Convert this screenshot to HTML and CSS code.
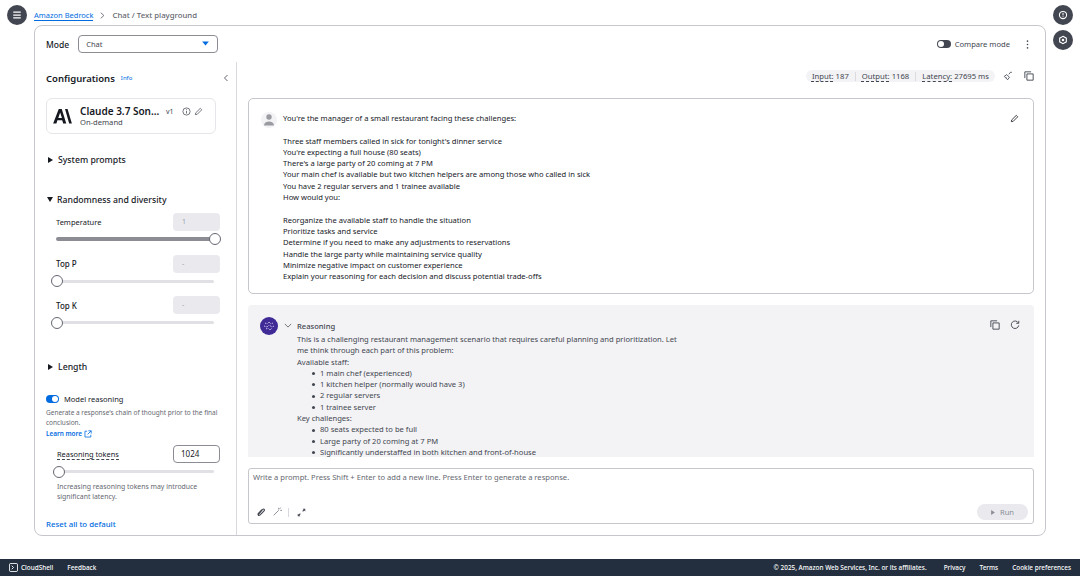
FILE: index.html
```html
<!DOCTYPE html>
<html lang="en">
<head>
<meta charset="utf-8">
<title>Chat / Text playground</title>
<link rel="stylesheet" href="styles.css">
</head>
<body>
<div class="page">
  <button class="fab fab-menu" aria-label="Menu"><svg viewBox="0 0 12 12" width="10" height="10"><path d="M1.500 2.500h9M1.500 6h9M1.500 9.500h9" stroke="#fff" stroke-width="1.500" fill="none"/></svg></button>
  <button class="fab fab-info" aria-label="Info"><svg viewBox="0 0 12 12" width="10" height="10"><circle cx="6" cy="6" r="4.300" stroke="#fff" stroke-width="1.300" fill="none"/><path d="M6 3.500v3M6 7.500v1" stroke="#fff" stroke-width="1.200"/></svg></button>
  <button class="fab fab-hex" aria-label="Notifications"><svg viewBox="0 0 12 12" width="10" height="10"><path d="M6 1.500l4 2.300v4.400l-4 2.300-4-2.300V3.800z" stroke="#fff" stroke-width="1.300" fill="none"/><circle cx="6" cy="6" r="1.500" fill="#fff"/></svg></button>

  <nav class="crumbs">
    <a class="crumb-link">Amazon Bedrock</a>
    <svg class="crumb-sep" viewBox="0 0 8 8" width="7" height="7"><path d="M2 .8L5.600 4 2 7.200" stroke="#656871" stroke-width="1" fill="none"/></svg>
    <span class="crumb-current">Chat / Text playground</span>
  </nav>

  <section class="card">
    <header class="card-head">
      <span class="mode-label">Mode</span>
      <div class="select"><span>Chat</span><svg viewBox="0 0 8 6" width="7" height="5"><path d="M0 .5h8L4 5.500z" fill="#006ce0"/></svg></div>
      <div class="head-right">
        <span class="toggle-off"></span>
        <span class="compare">Compare mode</span>
        <svg class="kebab" viewBox="0 0 4 12" width="3" height="9"><circle cx="2" cy="1.500" r="1.100" fill="#424650"/><circle cx="2" cy="6" r="1.100" fill="#424650"/><circle cx="2" cy="10.500" r="1.100" fill="#424650"/></svg>
      </div>
    </header>

    <div class="card-body">
      <aside class="side">
        <div class="side-title">
          <h2>Configurations</h2><a class="info">Info</a>
          <svg class="collapse" viewBox="0 0 8 10" width="6" height="8"><path d="M6 1L2 5l4 4" stroke="#424650" stroke-width="1.100" fill="none"/></svg>
        </div>

        <div class="model">
          <svg class="logo" viewBox="0 0 22 16" width="21" height="15"><path d="M7 0h3.200L15 15.500h-3.300l-1-3.500H5.600l-1.100 3.500H1zM8.500 3.800L6.500 9.700h3.900zM13.700 0h2.700L21 15.500h-2.900z" fill="#16191f"/></svg>
          <div class="model-text">
            <div class="model-name">Claude 3.7 Son...</div>
            <div class="model-sub">On-demand</div>
          </div>
          <span class="model-ver">v1</span>
          <svg class="ico-info" viewBox="0 0 10 10" width="9" height="9"><circle cx="5" cy="5" r="4" stroke="#424650" stroke-width=".8" fill="none"/><path d="M5 4.300v3M5 2.500v1" stroke="#424650" stroke-width=".8"/></svg>
          <svg class="ico-edit" viewBox="0 0 10 10" width="9" height="9"><path d="M1.500 8.500l.4-2L7 1.500l1.600 1.600-5 5z" stroke="#424650" stroke-width=".8" fill="none"/></svg>
        </div>

        <div class="section s-system"><i class="tri-right"></i>System prompts</div>
        <div class="section s-random"><i class="tri-down"></i>Randomness and diversity</div>

        <div class="param p-temp">
          <div class="param-row"><label class="thin">Temperature</label><span class="num">1</span></div>
          <div class="slider slider-full"><span class="knob knob-end"></span></div>
        </div>
        <div class="param p-next">
          <div class="param-row"><label>Top P</label><span class="num">-</span></div>
          <div class="slider"><span class="knob"></span></div>
        </div>
        <div class="param p-next">
          <div class="param-row"><label>Top K</label><span class="num">-</span></div>
          <div class="slider"><span class="knob"></span></div>
        </div>

        <div class="section s-length"><i class="tri-right"></i>Length</div>

        <div class="reason-toggle"><span class="toggle-on"></span>Model reasoning</div>
        <p class="hint">Generate a response's chain of thought prior to the final conclusion.</p>
        <a class="learn">Learn more <svg viewBox="0 0 10 10" width="8" height="8"><path d="M4 1.500H1.200v7.300h7.300V6M5.500 1H9v3.500M9 1L4.500 5.500" stroke="#006ce0" stroke-width="1" fill="none"/></svg></a>

        <div class="param p-tokens">
          <div class="param-row"><label class="dotted">Reasoning tokens</label><span class="num num-on">1024</span></div>
          <div class="slider slider-tok"><span class="knob"></span></div>
        </div>
        <p class="hint hint-tok">Increasing reasoning tokens may introduce significant latency.</p>
        <a class="reset">Reset all to default</a>
      </aside>

      <main class="main">
        <div class="stats">
          <div class="pill">
            <span><u>Input:</u> 187</span><b></b>
            <span><u>Output:</u> 1168</span><b></b>
            <span><u>Latency:</u> 27695 ms</span>
          </div>
          <svg class="stat-ico" viewBox="0 0 12 12" width="10" height="10"><path d="M1.500 6.500l3-2.200 3.200 3.200L5.500 10.500 1.500 6.500zM7 4l2.500-3M9.500 1l1 1M3.500 7.500l1 1" stroke="#424650" stroke-width="1" fill="none"/></svg>
          <svg class="stat-ico" viewBox="0 0 12 12" width="10" height="10"><path d="M1 8.500V1h7.500M3.500 3.500H11V11H3.500z" stroke="#424650" stroke-width="1.100" fill="none"/></svg>
        </div>

        <article class="msg msg-user">
          <div class="avatar-user"><svg viewBox="0 0 14 14" width="14" height="14"><circle cx="7" cy="4" r="2.700" fill="#9a9ba1"/><path d="M2 12.500c0-2.700 2.300-4 5-4s5 1.300 5 4z" fill="#9a9ba1"/></svg></div>
          <div class="msg-text">
            <p>You're the manager of a small restaurant facing these challenges:</p>
            <p class="blank"></p>
            <p>Three staff members called in sick for tonight's dinner service</p>
            <p>You're expecting a full house (80 seats)</p>
            <p>There's a large party of 20 coming at 7 PM</p>
            <p>Your main chef is available but two kitchen helpers are among those who called in sick</p>
            <p>You have 2 regular servers and 1 trainee available</p>
            <p>How would you:</p>
            <p class="blank"></p>
            <p>Reorganize the available staff to handle the situation</p>
            <p>Prioritize tasks and service</p>
            <p>Determine if you need to make any adjustments to reservations</p>
            <p>Handle the large party while maintaining service quality</p>
            <p>Minimize negative impact on customer experience</p>
            <p>Explain your reasoning for each decision and discuss potential trade-offs</p>
          </div>
          <svg class="msg-edit" viewBox="0 0 10 10" width="9" height="9"><path d="M1.500 8.500l.4-2L7 1.500l1.600 1.600-5 5z" stroke="#16191f" stroke-width=".9" fill="none"/></svg>
        </article>

        <article class="msg msg-reason">
          <div class="avatar-ai"><svg viewBox="0 0 18 18" width="18" height="18"><circle cx="9" cy="9" r="9" fill="#3f2a96"/><path d="M5 6l2 1 2-2 2 2 2-1M4 9l3 1 2-2 3 2 2-1M6 12l2-1 2 2 2-2" stroke="#d8d0f5" stroke-width="1" stroke-dasharray="1 .8" fill="none"/></svg></div>
          <div class="reason-body">
            <div class="reason-head"><svg viewBox="0 0 10 6" width="8" height="5"><path d="M1 1l4 4 4-4" stroke="#424650" stroke-width=".9" fill="none"/></svg><span>Reasoning</span></div>
            <div class="reason-text">
              <p>This is a challenging restaurant management scenario that requires careful planning and prioritization. Let me think through each part of this problem:</p>
              <p>Available staff:</p>
              <ul><li>1 main chef (experienced)</li><li>1 kitchen helper (normally would have 3)</li><li>2 regular servers</li><li>1 trainee server</li></ul>
              <p>Key challenges:</p>
              <ul><li>80 seats expected to be full</li><li>Large party of 20 coming at 7 PM</li><li>Significantly understaffed in both kitchen and front-of-house</li></ul>
            </div>
          </div>
          <div class="reason-actions">
            <svg viewBox="0 0 12 12" width="10" height="10"><path d="M1 8.500V1h7.500M3.500 3.500H11V11H3.500z" stroke="#424650" stroke-width="1.100" fill="none"/></svg>
            <svg viewBox="0 0 12 12" width="10" height="10"><path d="M10 3.500A4.500 4.500 0 1 0 10.500 6.500M10.500 1v3h-3" stroke="#424650" stroke-width="1.100" fill="none"/></svg>
          </div>
        </article>

        <div class="prompt">
          <div class="prompt-text">Write a prompt. Press Shift + Enter to add a new line. Press Enter to generate a response.</div>
          <div class="prompt-foot">
            <svg viewBox="0 0 12 12" width="10" height="10"><path d="M3 9l5-6c1.500-1.500 3 .2 1.700 1.600L5 9.500c-2 1.500-3.500-.5-2-2L7 3" stroke="#424650" stroke-width="1.300" fill="none"/></svg>
            <svg viewBox="0 0 12 12" width="10" height="10"><path d="M2 10l6-6M8 1v2M10 4h2M9 2l1.500-1" stroke="#8c8f98" stroke-width="1.200" fill="none"/></svg>
            <i class="vsep"></i>
            <svg viewBox="0 0 12 12" width="9" height="9"><path d="M7.500 1H11v3.500L9.700 3.200 8 5 7 4l1.800-1.700zM1 11V7.500l1.300 1.300L4 7l1 1-1.700 1.800L4.500 11z" fill="#424650"/></svg>
            <span class="run"><svg viewBox="0 0 6 8" width="4" height="5"><path d="M0 0l6 4-6 4z" fill="#8c8f98"/></svg>Run</span>
          </div>
        </div>
      </main>
    </div>
  </section>

  <footer class="foot">
    <svg viewBox="0 0 10 10" width="9" height="9"><rect x=".5" y=".5" width="9" height="9" rx="1.500" stroke="#fff" fill="none"/><path d="M3 3l2 2-2 2" stroke="#fff" fill="none"/></svg>
    <span class="foot-shell">CloudShell</span>
    <span class="foot-fb">Feedback</span>
    <span class="foot-right">
      <span class="foot-copy">© 2025, Amazon Web Services, Inc. or its affiliates.</span>
      <span>Privacy</span><span>Terms</span><span>Cookie preferences</span>
    </span>
  </footer>
</div>
</body>
</html>
```

FILE: styles.css
```css
* { box-sizing: border-box; }
html, body { margin: 0; padding: 0; background: #fff; }
body { font-family: "Noto Sans", "Open Sans", sans-serif; font-size: 7.600px; color: #16191f; }
p { margin: 0; }
button { border: 0; padding: 0; }

.page { position: relative; width: 1080px; height: 576px; overflow: hidden; display: flex; flex-direction: column; }

.fab { position: absolute; width: 20px; height: 20px; border-radius: 50%; background: #424650; display: flex; align-items: center; justify-content: center; }
.fab-menu { left: 7px; top: 5px; }
.fab-info { left: 1053px; top: 5px; }
.fab-hex { left: 1053px; top: 30px; }

.crumbs { height: 25px; padding: 5px 0 0 34px; display: flex; align-items: center; font-size: 7.500px; }
.crumb-link { color: #006ce0; border-bottom: 1px solid #006ce0; line-height: 10px; }
.crumb-sep { margin: 0 6px 0 6px; }
.crumb-current { color: #656871; font-weight: 500; font-size: 7.800px; }

.card { margin-left: 34px; width: 1012px; height: 511px; border: 1px solid #c6c6cd; border-radius: 8px; display: flex; flex-direction: column; }
.card-head { height: 36px; flex: none; display: flex; align-items: center; padding: 0 16px 0 11px; }
.mode-label { font-size: 8.500px; font-weight: 500; }
.select { margin-left: 9px; width: 140px; height: 18px; border: 1px solid #8c8c94; border-radius: 4px; display: flex; align-items: center; justify-content: space-between; padding: 0 8px 0 7px; color: #424650; font-size: 7.500px; margin-top: -1px; }
.head-right { margin-left: auto; display: flex; align-items: center; }
.toggle-off { width: 14px; height: 8px; border-radius: 4px; background: #424650; position: relative; }
.toggle-off::after { content: ""; position: absolute; left: 1px; top: 1px; width: 6px; height: 6px; border-radius: 50%; background: #fff; }
.compare { margin-left: 4px; color: #424650; }
.kebab { margin-left: 16px; }

.card-body { flex: 1; display: flex; min-height: 0; }

.side { width: 202px; flex: none; border-right: 1px solid #d8d8de; padding: 0 16px 0 11px; }
.side-title { height: 30px; padding-top: 2px; display: flex; align-items: center; }
.side-title h2 { margin: 0; font-size: 9.500px; font-weight: 600; }
.info { margin-left: 6px; font-size: 6px; color: #006ce0; }
.collapse { margin-left: auto; margin-right: -9px; }

.model { margin-top: 6px; width: 170px; height: 36px; border: 1px solid #e6e6ea; border-radius: 6px; display: flex; align-items: center; padding: 0 0 0 5px; position: relative; }
.logo { flex: none; }
.model-text { margin-left: 7px; width: 84px; }
.model-name { font-size: 10px; font-weight: 600; line-height: 13px; white-space: nowrap; }
.model-sub { color: #424650; line-height: 9px; }
.model-ver { margin-left: 2px; font-size: 7px; color: #424650; margin-bottom: 10px; }
.ico-info { margin-left: 8px; margin-bottom: 10px; }
.ico-edit { margin-left: 3px; margin-bottom: 10px; }

.section { display: flex; align-items: center; font-size: 8.700px; font-weight: 500; line-height: 12px; }
.tri-right { width: 0; height: 0; border-left: 5px solid #16191f; border-top: 3px solid transparent; border-bottom: 3px solid transparent; margin: 0 5px 0 2px; }
.tri-down { width: 0; height: 0; border-top: 5px solid #16191f; border-left: 3px solid transparent; border-right: 3px solid transparent; margin: 0 4px 0 1px; }
.s-system { margin-top: 20px; }
.s-random { margin-top: 27.500px; }
.s-length { margin-top: 37px; }

.param { padding-left: 10px; }
.param-row { display: flex; align-items: center; justify-content: space-between; height: 18px; }
.param-row label { font-weight: 500; font-size: 8px; }
.param-row label.thin { font-weight: 400; font-size: 7.500px; }
.param-row label.dotted { font-weight: 400; font-size: 7.400px; border-bottom: 1px dashed #424650; line-height: 10px; margin-left: 1px; }
.num { width: 47px; height: 18px; background: #e9e9ee; border-radius: 4px; padding-left: 9px; line-height: 18px; color: #9ba0a8; font-size: 7px; }
.num-on { background: #fff; border: 1px solid #8c8c94; color: #16191f; line-height: 16px; font-size: 8px; padding-left: 7px; }
.p-temp { margin-top: 7.500px; }
.p-next { margin-top: 13.500px; }
.p-tokens { margin-top: 7px; }

.slider { position: relative; margin-top: 7px; width: 158px; height: 3px; border-radius: 2px; background: #e0e0e5; }
.slider-full { background: #8c8c94; width: 159px; margin-top: 6px; height: 4px; }
.slider-tok { margin: 7px 0 0 2px; width: 156px; }
.knob { position: absolute; left: -5px; top: -4.500px; width: 12px; height: 12px; border-radius: 50%; background: #fff; border: 1px solid #656871; }
.knob-end { left: auto; right: -6px; top: -4px; }

.reason-toggle { margin-top: 20px; display: flex; align-items: center; color: #16191f; font-size: 7.500px; line-height: 12px; }
.toggle-on { width: 13px; height: 8px; border-radius: 4px; background: #006ce0; position: relative; margin-right: 5px; }
.toggle-on::after { content: ""; position: absolute; right: 1px; top: 1px; width: 6px; height: 6px; border-radius: 50%; background: #fff; }
.hint { font-size: 6.500px; line-height: 9.500px; color: #656871; margin-top: 3px; }
.learn { display: flex; align-items: center; gap: 2px; font-size: 6.400px; font-weight: 600; color: #006ce0; line-height: 9px; margin-top: 2px; }
.hint-tok { padding-left: 11px; margin-top: 9px; width: 155px; font-size: 6.900px; }
.reset { display: block; margin-top: 18px; color: #006ce0; font-weight: 500; font-size: 7.800px; line-height: 10px; }

.main { flex: 1; min-width: 0; padding: 0 11px; display: flex; flex-direction: column; }
.stats { height: 36px; flex: none; display: flex; align-items: center; justify-content: flex-end; padding-bottom: 8px; }
.pill { background: #f3f3f6; border-radius: 8px; height: 12px; display: flex; align-items: center; padding: 0 6px; font-size: 7.700px; color: #424650; }
.pill u { text-decoration: underline dashed; text-underline-offset: 1.500px; }
.pill b { width: 1px; height: 9px; background: #dcdce0; margin: 0 6px; }
.stat-ico { margin-left: 8px; }
.stat-ico + .stat-ico { margin-left: 11px; }

.msg { position: relative; flex: none; width: 786px; }
.msg-user { height: 196px; border: 1px solid #c6c6cd; border-radius: 5px; padding: 14px 0 0 12px; display: flex; }
.avatar-user { width: 16px; height: 16px; border-radius: 50%; background: #f3f3f6; display: flex; align-items: center; justify-content: center; margin-right: 6px; flex: none; margin-top: -1px; }
.msg-text { font-size: 7.600px; line-height: 11.300px; color: #16191f; }
.blank { height: 11.300px; }
.msg-edit { position: absolute; right: 14px; top: 15px; }

.msg-reason { margin-top: 11px; height: 152px; background: #f3f3f5; border-radius: 4px 4px 0 0; padding: 12px 0 0 12px; display: flex; overflow: hidden; }
.avatar-ai { flex: none; width: 18px; height: 18px; margin-right: 6px; }
.reason-body { width: 395px; }
.reason-head { display: flex; align-items: center; height: 17px; color: #424650; font-weight: 500; }
.reason-head span { margin-left: 5px; }
.reason-text { margin-left: 13px; font-size: 7.600px; line-height: 11.300px; color: #424650; }
.reason-text ul { margin: 0; padding-left: 15px; list-style: none; }
.reason-text li { display: flex; align-items: center; }
.reason-text li::before { content: ""; width: 3px; height: 3px; border-radius: 50%; background: #424650; margin-right: 5px; flex: none; }
.reason-actions { position: absolute; right: 14px; top: 15px; display: flex; gap: 10px; }

.prompt { margin-top: 11px; width: 786px; height: 56px; border: 1px solid #c6c6cd; border-radius: 3px; flex: none; padding: 3px 5px 3px 4px; display: flex; flex-direction: column; justify-content: space-between; }
.prompt-text { color: #656871; font-size: 7.600px; line-height: 11px; }
.prompt-foot { display: flex; align-items: center; gap: 6px; padding: 0 0 0 3px; height: 16px; }
.vsep { width: 1px; height: 9px; background: #d8d8de; margin: 0 2px 0 0; }
.run { margin-left: auto; width: 51px; height: 16px; border-radius: 8px; background: #e9e9ee; display: flex; align-items: center; justify-content: center; gap: 5px; color: #8c8f98; }

.foot { margin-top: auto; height: 17px; flex: none; background: #232f3e; color: #fff; display: flex; align-items: center; padding: 0 9px; font-size: 6.400px; font-weight: 500; }
.foot-shell { margin-left: 3px; }
.foot-fb { margin-left: 14px; }
.foot-right { margin-left: auto; display: flex; gap: 14px; }
.foot-copy { margin-right: 3px; }
```
